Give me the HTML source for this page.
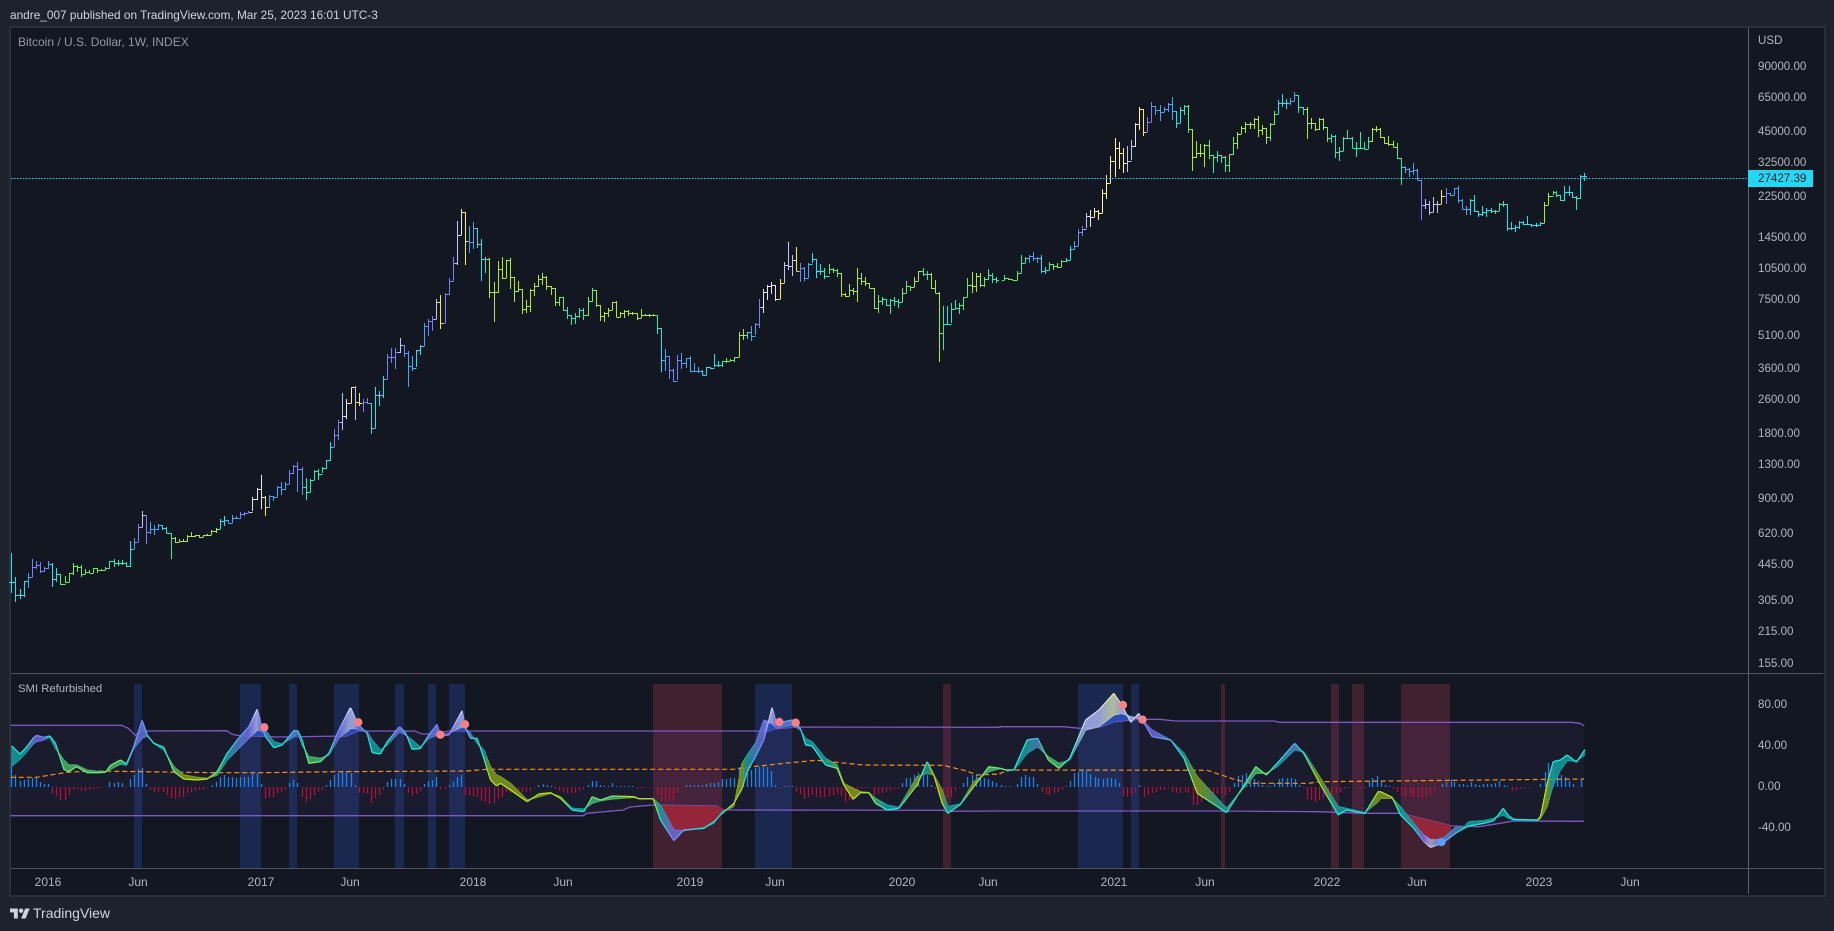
<!DOCTYPE html>
<html><head><meta charset="utf-8"><title>BTC chart</title>
<style>
html,body{margin:0;padding:0;background:#1e222d;width:1834px;height:931px;overflow:hidden}
body{position:relative;font-family:"Liberation Sans",sans-serif}
#frame{position:absolute;left:9px;top:26px;width:1813px;height:867px;border:2px solid #2a2e39;background:#131722}
#chart{position:absolute;left:0;top:0}
.t{position:absolute;line-height:16px;white-space:nowrap}
.p{left:1758px;font-size:11.6px;color:#b2b5be}
.x{width:60px;text-align:center;font-size:12px;color:#b2b5be;top:874px}
</style></head><body>
<div id="frame"></div>
<svg id="chart" width="1834" height="931" xmlns="http://www.w3.org/2000/svg"></svg>
<div class="t" style="left:10px;top:7px;font-size:11.85px;color:#d1d4dc">andre_007 published on TradingView.com, Mar 25, 2023 16:01 UTC-3</div>
<div class="t" style="left:18px;top:34px;font-size:12px;color:#9598a1">Bitcoin / U.S. Dollar, 1W, INDEX</div>
<div class="t" style="left:18px;top:681px;font-size:11.3px;color:#b2b5be">SMI Refurbished</div>
<div class="t p" style="top:33px">USD</div>
<div class="t p" style="top:59px">90000.00</div>
<div class="t p" style="top:90px">65000.00</div>
<div class="t p" style="top:124px">45000.00</div>
<div class="t p" style="top:155px">32500.00</div>
<div style="position:absolute;left:1748px;top:170px;width:65px;height:17px;background:#22d9f5"></div>
<div class="t p" style="top:171px;color:#131722">27427.39</div>
<div class="t p" style="top:189px">22500.00</div>
<div class="t p" style="top:230px">14500.00</div>
<div class="t p" style="top:261px">10500.00</div>
<div class="t p" style="top:292px">7500.00</div>
<div class="t p" style="top:328px">5100.00</div>
<div class="t p" style="top:361px">3600.00</div>
<div class="t p" style="top:392px">2600.00</div>
<div class="t p" style="top:426px">1800.00</div>
<div class="t p" style="top:457px">1300.00</div>
<div class="t p" style="top:491px">900.00</div>
<div class="t p" style="top:526px">620.00</div>
<div class="t p" style="top:557px">445.00</div>
<div class="t p" style="top:593px">305.00</div>
<div class="t p" style="top:624px">215.00</div>
<div class="t p" style="top:656px">155.00</div>
<div class="t p" style="top:697px">80.00</div>
<div class="t p" style="top:738px">40.00</div>
<div class="t p" style="top:779px">0.00</div>
<div class="t p" style="top:820px">-40.00</div>
<div class="t x" style="left:18px">2016</div>
<div class="t x" style="left:108px">Jun</div>
<div class="t x" style="left:231px">2017</div>
<div class="t x" style="left:320px">Jun</div>
<div class="t x" style="left:443px">2018</div>
<div class="t x" style="left:533px">Jun</div>
<div class="t x" style="left:660px">2019</div>
<div class="t x" style="left:745px">Jun</div>
<div class="t x" style="left:872px">2020</div>
<div class="t x" style="left:958px">Jun</div>
<div class="t x" style="left:1084px">2021</div>
<div class="t x" style="left:1175px">Jun</div>
<div class="t x" style="left:1297px">2022</div>
<div class="t x" style="left:1387px">Jun</div>
<div class="t x" style="left:1509px">2023</div>
<div class="t x" style="left:1600px">Jun</div>
<svg style="position:absolute;left:10px;top:908px" width="20" height="11" viewBox="0 4 36 18"><path fill="#d1d4dc" d="M14 22H7V11H0V4h14v18zM28 22h-8l7.5-18h8L28 22z"/><circle fill="#d1d4dc" cx="20" cy="8" r="4"/></svg>
<div class="t" style="left:33px;top:905px;font-size:14px;color:#d1d4dc">TradingView</div>
<script>
var C={Y:'#ffeb3b',W:'#e6e6ee',V:'#c0c4f0',K:'#fff59d',I:'#7b80f5',B:'#42a5f5',C:'#18e5ee',T:'#22eeb0',G:'#62ee6a',L:'#aeea28'};
var paths={},prev=null;
function bars(x0,y0,sx,d){var col='C',i=0;while(i<d.length){if(typeof d[i]=='string'){col=d[i];i++;continue}
var X=Math.floor(x0+d[i]/sx)+.5,h=y0+d[i+1]/3,l=y0+d[i+2]/3,c=y0+d[i+3]/3;h=Math.min(h,c);l=Math.max(l,c);var o=prev===null?c:prev;
var Oy=Math.round(o)+.5,Cy=Math.round(c)+.5;
paths[col]=(paths[col]||'')+'M'+X+' '+Math.round(h)+'V'+Math.round(l)+'M'+(X-2.5)+' '+Oy+'H'+X+'M'+X+' '+Cy+'H'+(X+2.5);
prev=c;i+=4}}
bars(0,300,3,['C',34,760,880,845,46,832,905,886,61,868,896,884,73,842,890,844,'B',85,820,864,832,'I',97,778,832,802,109,782,808,796,121,787,818,814,133,802,815,803,'B',145,784,806,791,'C',157,790,860,838,169,805,845,823,'G',181,823,854,851,197,828,848,845,209,820,846,820,221,790,824,798,233,796,815,801,245,796,830,822,257,808,822,817,269,811,820,818,281,805,818,805,293,805,818,811,305,807,814,810,317,802,810,805,'T',329,784,806,784,343,778,800,790,355,781,798,788,367,781,796,789,379,787,800,799,'C',391,724,800,746,'B',403,715,746,725,'I',415,673,726,680,'V',427,634,682,644,'I',439,644,731,695,'B',451,667,703,686,463,675,705,686,475,673,690,676,'C',487,676,689,684,499,680,700,698,'T',515,698,776,714,'L',527,712,728,725,539,717,727,722,551,717,725,724,563,706,725,707,575,697,712,708,587,705,710,706,599,706,713,711,611,704,710,706,623,702,708,705,635,690,705,692,649,685,698,688,'C',661,658,688,664,673,649,677,660,'B',685,659,670,668,697,646,668,655,709,648,656,655,'I',721,636,656,642,733,637,647,640,745,633,640,635,'W',757,590,633,598,772,565,600,566,784,526,626,592,'Y',796,588,648,622,'B',808,584,623,588,820,588,602,592,832,558,590,560,844,546,585,566,856,547,570,552,'I',868,510,552,520,880,494,522,498,892,487,575,508,'B',907,502,585,562,'T',919,535,599,577,931,538,577,540,943,511,540,513,955,506,540,522,967,502,520,505,'C',979,480,508,481,991,427,482,441,'I',1003,388,440,404,1015,361,420,367,'V',1027,280,390,347,'W',1039,298,356,308,'K',1053,262,308,262,'V',1066,259,360,307,'Y',1078,279,318,308,'I',1090,298,336,306,1102,294,312,310,'C',1114,308,402,385,1126,262,385,284,1138,274,318,284,1150,229,294,238,'I',1162,163,238,172,1174,145,188,172,1186,145,207,156,'V',1201,114,158,134,'I',1213,134,170,160,'B',1225,152,261,199,1237,168,212,204,'C',1249,150,200,151,1261,136,165,138,'B',1273,70,138,79,'I',1285,56,107,64,1297,49,94,58]);
bars(0,0,3,['V',1309,897,958,905,'Y',1321,885,986,970,'I',1336,880,968,882,1348,835,885,843,1360,771,843,788,'V',1372,663,795,706,'W',1384,628,705,636,'Y',1396,636,795,724,'B',1408,678,758,727,1420,667,747,684,'C',1432,684,745,733,1444,718,842,778,'T',1456,770,818,778,'L',1468,775,895,877,1484,847,966,877,1496,784,880,808]);
bars(500,200,3,['L',7,172,238,234,19,180,235,181,31,175,266,231,43,231,305,274,55,243,275,267,67,267,341,328,79,300,340,319,91,268,335,270,103,248,288,258,115,225,260,238,127,220,255,230,139,228,270,258,154,258,284,264,166,264,318,307,'G',178,290,318,292,190,291,332,330,'T',202,322,356,344,214,344,375,355,226,340,372,347,238,325,355,331,250,325,360,346,'G',265,292,347,303,277,265,305,270,'L',289,270,322,315,301,315,363,348,313,335,366,339,325,325,352,329,337,306,331,306,349,304,352,350,361,337,352,340,373,330,354,334,385,331,347,338,397,336,345,338,412,338,359,353,424,327,355,344,436,343,346,344,448,341,351,346,460,341,348,346,'T',472,346,402,385,'C',484,385,516,481,'B',496,447,513,469,'I',508,469,537,510,520,508,545,542,532,466,540,481,'B',544,460,506,490,559,473,505,474,571,468,515,514,583,490,515,512,595,502,520,512,'C',607,510,526,525,619,500,526,501,631,501,508,504,643,462,502,495,655,483,500,496,'T',667,483,500,483,'G',679,474,490,482,691,476,483,480,703,472,485,472,'L',718,395,472,404,730,388,420,405,'T',742,395,416,396,'B',754,378,423,407,766,370,406,372,'I',778,297,384,322,'W',790,268,338,275,802,255,300,257,814,247,283,256,826,256,302,296,'Y',841,237,296,250,'V',853,187,248,196,865,127,210,199,877,166,228,181,'Y',889,142,214,212,'I',901,190,246,203,'B',913,202,242,234,925,190,234,192,'C',937,160,190,178,949,178,233,212,961,193,225,213,'T',973,205,236,227,'G',988,193,223,207,1000,205,218,210,1012,208,230,218,'L',1024,218,291,282,1036,280,290,287,1048,252,287,270,1060,265,286,274,1072,205,305,233,1084,220,254,244,1096,232,257,248,1108,248,265,265,1123,265,326,323,'G',1135,286,338,304,'T',1147,290,315,298,1159,298,318,316,1171,297,342,300,1183,292,318,303,1195,298,324,306,'G',1207,265,306,278,1219,243,278,258,1231,258,272,262,'L',1243,232,262,244,1255,214,244,214,'T',1270,205,228,222,1282,212,240,221,'L',1294,220,266,265,1306,240,280,280,1318,277,486,398,'T',1330,318,450,371,'C',1342,318,376,372,'T',1354,310,370,328,1366,300,328,323,1378,308,342,315,'G',1390,290,330,291,1402,235,292,254,'L',1417,216,278,258,1429,220,275,229,1441,220,260,255,'G',1453,232,262,236,'T',1465,208,240,226,1477,220,250,237,1489,232,250,240]);
bars(1000,80,2.613,['G',11,586,600,594,22,594,600,598,33,596,600,600,45,574,600,578,'T',56,525,578,550,66,530,550,534,'B',77,524,548,528,87,517,542,535,98,530,550,535,'C',108,526,580,572,119,561,582,570,'T',129,546,570,552,'G',140,552,570,558,151,550,565,562,161,541,562,544,'T',173,535,545,540,'C',184,498,540,508,'B',195,483,510,497,'I',205,448,498,457,216,438,468,447,'V',226,400,445,407,'W',237,390,442,412,'K',247,385,412,392,257,390,420,398,268,328,398,340,279,286,356,309,289,228,310,244,301,175,290,203,312,187,268,220,323,205,280,249,'V',333,198,276,242,344,180,240,197,'W',354,128,200,131,'K',365,82,150,88,'Y',375,88,167,155,'I',386,112,155,125,396,66,125,77,'B',407,77,105,89,419,76,122,97,430,80,96,87,440,68,96,73,450,52,120,93,'C',461,93,143,130,472,82,130,90,'T',483,76,106,78,'G',493,76,160,146,'L',503,146,272,230,514,183,235,220,524,193,232,220,534,193,260,195,'G',547,181,238,225,'T',558,225,280,230,568,213,245,224,578,224,248,232,589,228,275,254,'G',600,222,275,223,611,172,224,190,'L',620,155,207,163,632,137,162,145,642,125,160,132,654,125,148,133,665,115,148,117,675,108,170,151,686,135,166,143,697,143,191,170,'G',707,130,182,133,717,92,134,102,'C',728,60,102,68,739,42,80,70,749,58,87,70,'B',759,55,75,62,770,37,62,46,'T',781,46,98,82,792,82,105,88,'L',803,80,177,130,814,113,146,128,825,128,152,146,835,115,150,117,846,115,150,141,'G',857,140,185,174,'T',867,162,190,167,877,166,235,217,888,200,243,213,898,172,212,173,909,150,175,175,921,172,205,204,931,187,230,205,942,155,208,205,952,185,208,206,963,172,207,183,'L',974,145,185,147,985,137,155,148,995,143,173,171,1005,172,192,190,1015,168,197,193,1027,183,202,202,'G',1038,190,236,234,'T',1049,234,315,260,'B',1060,258,280,268,1070,265,290,273,1081,250,285,270,1091,268,300,300,'I',1101,300,420,376,'V',1112,358,388,371,1122,362,404,395,1133,352,395,372,1143,362,398,372,'Y',1153,330,372,349,'I',1166,324,372,340,'B',1177,338,349,345,1187,324,345,324,1198,318,370,360,1208,358,388,387,1219,378,404,386,'C',1229,358,404,360,1240,345,395,392,1251,392,410,402,1261,378,408,397,1272,384,411,390,1283,385,398,394,'T',1294,390,402,392,1305,370,392,373,1315,364,380,372,'C',1326,372,452,443,1337,427,450,443,1347,435,456,441,1357,423,446,426,1368,423,435,431,1379,408,436,433,1390,431,440,436,1401,430,441,436,1412,426,437,428,'L',1423,366,428,374,1434,338,375,348,'G',1445,333,345,337,'T',1455,333,352,344,1465,345,362,361,'C',1476,318,362,335,1487,318,347,337,1497,337,355,351,'T',1506,348,390,355,'C',1517,286,356,288,1527,280,303,288]);

function sv(x0,sx,a){var r=[];for(var i=0;i<a.length;i+=2)r.push([x0+a[i]/sx,660+a[i+1]/3]);return r}
function at(p,x){if(x<=p[0][0])return p[0][1];for(var i=1;i<p.length;i++)if(x<=p[i][0]){var t=(x-p[i-1][0])/(p[i][0]-p[i-1][0]||1);return p[i-1][1]+t*(p[i][1]-p[i-1][1])}return p[p.length-1][1]}
function pl(p){return p.map(function(q){return q[0].toFixed(1)+','+q[1].toFixed(1)}).join(' ')}
var Z3=3,Z5=1568/834;
var up=sv(0,3,[32,196,365,196,385,205,405,225,425,213,680,212,695,222,710,226,830,231,1040,228,1075,213,1245,213,1265,222,1310,222,1345,213,1500,213]).concat(sv(500,3,[0,213,810,213,820,207,890,201,1500,202])).concat(sv(1000,Z5,[0,200,120,200,150,205,190,200,215,185,260,178,300,178,330,183,515,183,525,187,1075,187,1090,190,1098,197]));
var lo=sv(0,3,[32,467,1500,467]).concat(sv(500,3,[0,467,250,467,260,460,370,450,390,441,460,435,650,438,670,450,1330,451,1342,454,1500,453])).concat(sv(1000,Z5,[0,453,400,453,600,455,680,460,750,460,780,470,850,498,900,500,940,490,965,483,1098,484]));
var or=sv(0,3,[32,352,110,352,200,337,280,333,650,338,790,338,1000,335,1400,333,1460,328,1500,328]).concat(sv(500,3,[0,328,700,328,740,322,870,308,950,301,1090,315,1330,316,1400,333,1430,345,1500,342])).concat(sv(1000,Z5,[0,340,20,330,390,331,440,358,470,370,580,370,600,365,1098,357]));
var F={L:[127,154,26],G:[70,176,106],T:[21,158,158],B:[74,128,196],I:[106,104,216],V:[165,173,216],Y:[200,207,144]};
var E={L:[180,225,42],G:[111,232,120],T:[34,232,216],B:[90,176,240],I:[128,128,245],V:[208,212,240],Y:[232,236,154]};
var keys=[];
function rk(x0,sx,d){for(var i=0;i<d.length;i+=4)keys.push([x0+d[i+1]/sx,660+d[i+2]/3,660+d[i+3]/3,d[i]])}
rk(0,3,['T',32,256,320,'T',58,282,298,'T',75,265,280,'B',100,232,250,'I',108,226,245,'I',130,232,240,'T',148,228,232,'T',165,250,265,'G',190,328,300,'G',205,335,315,'G',228,320,315,'G',260,338,330,'G',290,338,334,'G',315,337,335,'G',330,316,328,'G',360,300,312,'T',378,312,316,'B',400,260,265,'I',425,180,235,'B',440,225,228,'T',460,250,250,'T',490,262,270,'G',520,335,320,'L',550,357,345,'L',590,360,352,'L',620,357,355,'G',650,335,345,'T',680,280,300,'B',710,240,270,'I',745,200,235,'V',770,148,210,'I',785,205,215,'B',795,230,210,'T',820,263,245,'T',845,255,252,'B',880,212,230,'B',892,212,220,'T',905,240,255,'G',925,310,290,'G',960,305,295,'T',985,280,285,'I',1015,210,235,'V',1050,142,205,'V',1062,170,205,'I',1075,195,210,'B',1100,220,215,'T',1115,278,240,'T',1140,282,270,'T',1160,245,255,'I',1197,200,215,'B',1215,218,225,'T',1235,268,240,'T',1260,265,262,'B',1285,225,235,'I',1310,193,225,'I',1320,228,225,'I',1345,225,220,'V',1385,152,200,'I',1395,205,205,'B',1410,235,220,'T',1430,235,250,'T',1450,295,270,'L',1470,360,320,'L',1488,378,345]);
rk(500,3,['L',0,370,350,'L',30,390,370,'L',80,425,420,'L',115,402,410,'L',150,398,400,'L',180,415,410,'T',215,450,445,'T',250,455,447,'G',275,410,430,'G',300,420,422,'G',335,408,417,'L',400,410,412,'L',415,416,416,'L',458,416,416,'T',480,480,435,'I',520,542,510,'B',550,510,512,'T',610,505,503,'T',640,485,490,'T',665,460,455,'L',700,430,440,'L',725,385,310,'T',740,335,285,'B',765,290,250,'I',790,240,180,'V',815,142,190,'I',828,190,205,'B',875,180,195,'B',900,205,210,'T',915,255,235,'T',935,258,245,'T',975,315,295,'G',1010,325,315,'L',1030,375,370,'L',1058,418,385,'L',1080,398,395,'L',1105,398,398,'G',1125,430,415,'T',1160,450,435,'T',1195,445,442,'L',1250,375,350,'T',1280,305,340,'L',1300,345,345,'L',1325,430,390,'T',1342,460,440,'T',1380,433,432,'L',1420,380,365,'G',1465,320,335,'G',1500,325,325]);
rk(1000,Z5,['G',10,330,330,'T',25,330,330,'T',50,240,280,'B',70,235,260,'G',90,300,290,'G',110,325,310,'T',130,295,300,'V',160,180,210,'V',185,150,200,'Y',213,100,165,'V',228,135,160,'V',245,187,170,'V',260,160,175,'I',270,190,185,'I',285,230,210,'B',320,240,240,'T',345,295,280,'L',370,400,350,'T',425,458,445,'G',480,320,340,'G',500,345,340,'T',520,310,320,'B',553,250,270,'T',570,280,275,'L',600,370,350,'T',635,465,440,'T',650,450,445,'T',685,460,458,'L',710,395,425]);
rk(1380,3,['L',0,395,415,'L',35,412,415,'T',60,465,440,'T',100,505,490,'I',130,545,525,'V',150,562,540,'B',185,550,538,'B',225,520,502,'T',250,505,502,'T',265,498,485,'T',310,490,482,'T',340,482,475,'T',368,445,465,'T',385,468,475,'T',400,478,480,'T',470,480,482,'L',480,470,475,'L',500,370,440,'T',518,305,375,'T',540,300,330,'T',560,285,302,'T',588,307,303,'T',612,270,285]);
function key(x){var i=1;while(i<keys.length-1&&keys[i][0]<x)i++;var a=keys[i-1],b=keys[i],t=Math.max(0,Math.min(1,(x-a[0])/(b[0]-a[0]||1)));return{a:a[1]+t*(b[1]-a[1]),b:a[2]+t*(b[2]-a[2]),f:mix(F[a[3]],F[b[3]],t),e:mix(E[a[3]],E[b[3]],t)}}
function mix(p,q,t){return 'rgb('+[0,1,2].map(function(i){return Math.round(p[i]+t*(q[i]-p[i]))}).join(',')+')'}
var s='';
/* bars */
for(var k in paths)s+='<path d="'+paths[k]+'" stroke="'+C[k]+'" stroke-width="1" fill="none" shape-rendering="crispEdges"/>';
/* dotted last price */
s+='<path d="M11 178.5H1748" stroke="#22d9f5" stroke-width="1" stroke-dasharray="1.5 1.5"/>';
/* pane bands */
function band(x1,x2,c){s+='<rect x="'+Math.round(x1)+'" y="684" width="'+Math.round(x2-x1)+'" height="184" fill="'+c+'"/>'}
var BL='#1a2850',RD='#412030';
[[402,426],[720,783],[867,891],[1002,1077],[1185,1212],[1284,1308],[1347,1395]].forEach(function(b){band(b[0]/3,b[1]/3,BL)});
band(500+459/3,500+666/3,RD);band(500+765/3,500+876/3,BL);band(500+1329/3,500+1353/3,RD);
[[147,231,BL],[246,261,BL],[416,423,RD],[622,637,RD],[662,684,RD],[754,846,RD]].forEach(function(b){band(1000+b[0]/Z5,1000+b[1]/Z5,b[2])});
/* channel fill */
s+='<polygon points="'+pl(up)+' '+pl(lo.slice().reverse())+'" fill="#7e57c2" fill-opacity=".07"/>';
/* histogram */
var hd={'p':'','n':''};
function hist(x0,sx,d){for(var i=0;i<d.length;i+=2){var x=Math.floor(x0+d[i]/sx)+.5,y=Math.round(660+d[i+1]/3);hd[d[i+1]<380?'p':'n']+='M'+x+' 787V'+y}}
hist(0,3,[34,310,46,345,61,362,73,360,85,357,97,355,109,352,121,367,133,372,145,373,157,402,169,407,181,420,197,420,209,405,221,390,233,388,245,392,257,392,269,390,281,388,293,387,305,384,317,382,329,366,343,368,355,366,367,369,379,384,391,358,403,344,415,328,427,324,439,372,451,390,463,395,475,396,491,397,503,405,515,413,527,417,539,414,551,410,563,400,575,397,587,392,599,390,611,390,623,385,637,374,649,366,661,352,673,345,685,351,697,352,709,354,721,352,733,350,745,350,757,340,772,338,784,372,796,416,808,412,820,410,832,400,844,396,856,390,868,370,880,360,892,368,907,410,919,426,931,418,943,405,955,396,967,390,979,376,991,360,1003,344,1015,338,1027,336,1039,336,1053,340,1066,376,1078,398,1090,398,1102,403,1114,428,1126,415,1138,405,1150,390,1162,366,1174,358,1186,356,1201,356,1213,373,1225,400,1237,407,1249,402,1261,392,1273,373,1285,362,1297,360,1309,352,1321,390,1336,388,1348,376,1360,365,1372,352,1385,345,1397,405,1409,408,1421,408,1433,412,1445,422,1457,425,1469,432,1484,430,1496,418]);
hist(500,3,[7,412,19,395,31,400,43,402,55,400,67,395,79,395,91,393,103,385,115,375,130,373,142,375,154,378,166,388,178,392,190,395,202,398,214,400,226,400,238,393,250,388,265,375,277,362,289,362,301,375,313,378,325,378,337,370,349,378,361,378,373,378,385,378,397,378,412,386,424,386,436,384,448,384,460,382,472,405,484,422,496,425,508,423,520,422,532,400,544,385,559,375,571,375,583,375,595,375,607,375,619,372,631,370,643,368,655,365,667,358,679,357,691,355,703,354,718,320,730,325,742,323,754,330,766,325,778,320,790,316,802,320,814,332,826,376,841,388,853,378,865,378,877,378,889,395,901,402,913,417,925,410,937,405,949,410,961,413,973,412,988,408,1000,405,1012,403,1024,408,1036,425,1048,420,1060,415,1072,400,1084,388,1096,385,1108,385,1123,405,1135,402,1147,398,1159,395,1171,393,1183,388,1195,386,1207,370,1219,355,1231,355,1243,345,1255,338,1270,330,1282,345,1294,375,1306,386,1318,405,1330,420,1342,415,1354,410,1366,392,1378,385,1390,370,1402,350,1417,345,1429,345,1441,350,1453,355,1465,358,1477,362,1489,370]);
hist(1000,Z5,[2,375,10,378,20,378,33,372,40,350,48,345,56,350,63,352,71,373,79,395,87,402,94,406,102,400,110,395,118,390,125,378,133,362,140,340,148,335,156,332,163,330,171,342,179,350,186,354,194,356,202,355,209,353,217,358,225,370,232,408,240,412,248,408,255,400,263,375,271,412,279,405,286,400,294,395,302,390,309,390,317,385,325,395,332,400,340,400,348,395,355,400,363,434,371,435,378,425,386,415,394,410,401,405,409,402,417,400,424,405,432,395,440,370,448,348,455,345,463,340,471,345,478,358,486,362,494,375,502,378,509,378,517,368,525,356,532,353,540,353,548,354,555,358,563,375,571,385,578,418,586,420,594,425,601,420,609,415,617,410,624,402,632,400,640,396,648,388,655,385,663,382,671,385,678,388,686,385,694,362,701,355,709,348,717,362,724,375,732,378,740,388,748,395,755,405,763,410,771,408,778,410,786,412,794,415,802,412,809,405,817,395,825,380,832,372,840,366,848,358,855,366,863,373,871,372,879,376,886,365,894,372,902,375,909,373,917,373,925,372,932,368,940,363,948,375,955,378,963,392,971,390,978,386,986,384,994,383,1001,382,1009,381,1017,372,1025,335,1032,310,1040,320,1048,342,1056,345,1063,352,1071,362,1079,372,1086,384,1094,360]);
s+='<path d="'+hd.p+'" stroke="#1b83ee" stroke-width="1.3"/><path d="'+hd.n+'" stroke="#b0103c" stroke-width="1.3"/>';
/* orange dashed */
s+='<polyline points="'+pl(or)+'" fill="none" stroke="#f7931a" stroke-width="1.2" stroke-dasharray="5 3"/>';
/* channel lines */
s+='<polyline points="'+pl(up)+'" fill="none" stroke="#7e57c2" stroke-width="1.3"/><polyline points="'+pl(lo)+'" fill="none" stroke="#7e57c2" stroke-width="1.3"/>';
/* ribbon */
var ra='',rb='',last=null;
for(var x=11;x<1585;x++){var q=key(x+.5),t=Math.min(q.a,q.b),m=Math.max(q.a,q.b),U=at(up,x),D=at(lo,x);
if(t<U)s+='<rect x="'+x+'" y="'+t.toFixed(1)+'" width="1" height="'+(U-t).toFixed(1)+'" fill="#2a4db4"/>';
if(((x>655&&x<723)||(x>1400&&x<1451))&&m>D)s+='<rect x="'+x+'" y="'+D.toFixed(1)+'" width="1" height="'+(m-D).toFixed(1)+'" fill="#95263a"/>';
s+='<rect x="'+x+'" y="'+t.toFixed(1)+'" width="1" height="'+Math.max(.5,m-t).toFixed(1)+'" fill="'+q.f+'" fill-opacity=".85"/>';
if(last){ra+='<path d="M'+x+' '+last.a.toFixed(1)+'L'+(x+1)+' '+q.a.toFixed(1)+'" stroke="'+q.e+'"/>';rb+='<path d="M'+x+' '+last.b.toFixed(1)+'L'+(x+1)+' '+q.b.toFixed(1)+'" stroke="'+q.f+'"/>'}
last=q}
s+='<g stroke-width="1.2" stroke-linecap="round" fill="none">'+rb+ra+'</g>';
/* dots */
function dot(x,y,c){s+='<circle cx="'+x.toFixed(1)+'" cy="'+(660+y/3).toFixed(1)+'" r="4.2" fill="'+c+'"/>'}
[793,1075,1321,1395].forEach(function(x,i){dot(x/3,[202,187,224,193][i],'#f77f85')});
dot(500+838/3,186,'#f77f85');dot(500+887/3,188,'#f77f85');
dot(1000+231/Z5,135,'#f77f85');dot(1000+268/Z5,179,'#f77f85');dot(1000+830/Z5,546,'#5c9cff');
/* separators */
s+='<path d="M11 673.5H1823M11 868.5H1823" stroke="#50535e" stroke-width="1" shape-rendering="crispEdges"/><path d="M1748.5 28V894" stroke="#5d606b" stroke-width="1" shape-rendering="crispEdges"/>';
document.getElementById('chart').innerHTML=s;
</script>
</body></html>
